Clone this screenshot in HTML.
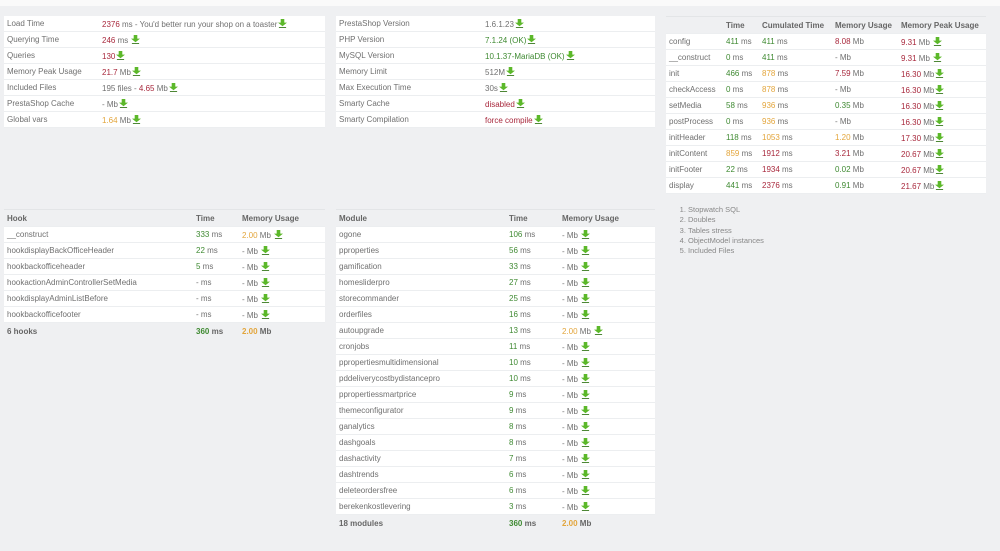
<!DOCTYPE html><html><head><meta charset="utf-8"><style>
body{margin:0;width:1000px;height:551px;background:#eff0f2;font-family:"Liberation Sans",sans-serif;font-size:8px;color:#707070;position:relative;overflow:hidden}
.top{position:absolute;left:0;top:0;width:1000px;height:6px;background:#fafafa}
.t{position:absolute;border-collapse:collapse;table-layout:fixed}
.t td,.t th{height:15px;padding:0 0 0 3px;border-bottom:1px solid #eceef0;white-space:nowrap;overflow:hidden;text-align:left;font-weight:normal}
.t tbody td{background:#fff}
.t th{background:#eff0f2;color:#666;font-weight:bold;border-top:1px solid #e3e5e7;height:16px}
.t tfoot td{background:#eff0f2;font-weight:bold;color:#666;border:none;height:16px}
.r{color:#a8283c}.g{color:#3f8a32}.o{color:#e3a53b}
.i{display:inline-block;width:9px;height:9px;vertical-align:-1px;margin-left:1px}
ol{position:absolute;left:668px;top:205px;margin:0;padding-left:20px;font-size:7.5px;line-height:10.3px;color:#888}
</style></head><body><div class="top"></div>
<svg width="0" height="0" style="position:absolute"><defs><symbol id="a" viewBox="0 0 10 10"><path d="M3 0h4v4h3L5 8 0 4h3z" fill="#5cb82a"/><rect x="1" y="9" width="8" height="1" fill="#3a7a20"/></symbol></defs></svg>

<table class="t" style="left:4px;top:16px;width:321px"><colgroup><col style="width:95px"><col></colgroup><tbody>
<tr><td>Load Time</td><td><span class="r">2376</span> ms - You'd better run your shop on a toaster<svg class="i"><use href="#a"/></svg></td></tr>
<tr><td>Querying Time</td><td><span class="r">246</span> ms <svg class="i"><use href="#a"/></svg></td></tr>
<tr><td>Queries</td><td><span class="r">130</span><svg class="i"><use href="#a"/></svg></td></tr>
<tr><td>Memory Peak Usage</td><td><span class="r">21.7</span> Mb<svg class="i"><use href="#a"/></svg></td></tr>
<tr><td>Included Files</td><td>195 files - <span class="r">4.65</span> Mb<svg class="i"><use href="#a"/></svg></td></tr>
<tr><td>PrestaShop Cache</td><td>- Mb<svg class="i"><use href="#a"/></svg></td></tr>
<tr><td>Global vars</td><td><span class="o">1.64</span> Mb<svg class="i"><use href="#a"/></svg></td></tr>
</tbody></table>

<table class="t" style="left:336px;top:16px;width:319px"><colgroup><col style="width:146px"><col></colgroup><tbody>
<tr><td>PrestaShop Version</td><td>1.6.1.23<svg class="i"><use href="#a"/></svg></td></tr>
<tr><td>PHP Version</td><td><span class="g">7.1.24 (OK)</span><svg class="i"><use href="#a"/></svg></td></tr>
<tr><td>MySQL Version</td><td><span class="g">10.1.37-MariaDB (OK)</span><svg class="i"><use href="#a"/></svg></td></tr>
<tr><td>Memory Limit</td><td>512M<svg class="i"><use href="#a"/></svg></td></tr>
<tr><td>Max Execution Time</td><td>30s<svg class="i"><use href="#a"/></svg></td></tr>
<tr><td>Smarty Cache</td><td><span class="r">disabled</span><svg class="i"><use href="#a"/></svg></td></tr>
<tr><td>Smarty Compilation</td><td><span class="r">force compile</span><svg class="i"><use href="#a"/></svg></td></tr>
</tbody></table>

<table class="t" style="left:666px;top:16px;width:320px"><colgroup><col style="width:57px"><col style="width:36px"><col style="width:73px"><col style="width:66px"><col></colgroup>
<thead><tr><th></th><th>Time</th><th>Cumulated Time</th><th>Memory Usage</th><th>Memory Peak Usage</th></tr></thead><tbody>
<tr><td>config</td><td><span class="g">411</span> ms</td><td><span class="g">411</span> ms</td><td><span class="r">8.08</span> Mb</td><td><span class="r">9.31</span> Mb <svg class="i"><use href="#a"/></svg></td></tr>
<tr><td>__construct</td><td><span class="g">0</span> ms</td><td><span class="g">411</span> ms</td><td>- Mb</td><td><span class="r">9.31</span> Mb <svg class="i"><use href="#a"/></svg></td></tr>
<tr><td>init</td><td><span class="g">466</span> ms</td><td><span class="o">878</span> ms</td><td><span class="r">7.59</span> Mb</td><td><span class="r">16.30</span> Mb<svg class="i"><use href="#a"/></svg></td></tr>
<tr><td>checkAccess</td><td><span class="g">0</span> ms</td><td><span class="o">878</span> ms</td><td>- Mb</td><td><span class="r">16.30</span> Mb<svg class="i"><use href="#a"/></svg></td></tr>
<tr><td>setMedia</td><td><span class="g">58</span> ms</td><td><span class="o">936</span> ms</td><td><span class="g">0.35</span> Mb</td><td><span class="r">16.30</span> Mb<svg class="i"><use href="#a"/></svg></td></tr>
<tr><td>postProcess</td><td><span class="g">0</span> ms</td><td><span class="o">936</span> ms</td><td>- Mb</td><td><span class="r">16.30</span> Mb<svg class="i"><use href="#a"/></svg></td></tr>
<tr><td>initHeader</td><td><span class="g">118</span> ms</td><td><span class="o">1053</span> ms</td><td><span class="o">1.20</span> Mb</td><td><span class="r">17.30</span> Mb<svg class="i"><use href="#a"/></svg></td></tr>
<tr><td>initContent</td><td><span class="o">859</span> ms</td><td><span class="r">1912</span> ms</td><td><span class="r">3.21</span> Mb</td><td><span class="r">20.67</span> Mb<svg class="i"><use href="#a"/></svg></td></tr>
<tr><td>initFooter</td><td><span class="g">22</span> ms</td><td><span class="r">1934</span> ms</td><td><span class="g">0.02</span> Mb</td><td><span class="r">20.67</span> Mb<svg class="i"><use href="#a"/></svg></td></tr>
<tr><td>display</td><td><span class="g">441</span> ms</td><td><span class="r">2376</span> ms</td><td><span class="g">0.91</span> Mb</td><td><span class="r">21.67</span> Mb<svg class="i"><use href="#a"/></svg></td></tr>
</tbody></table>

<ol><li>Stopwatch SQL</li><li>Doubles</li><li>Tables stress</li><li>ObjectModel instances</li><li>Included Files</li></ol>

<table class="t" style="left:4px;top:209px;width:321px"><colgroup><col style="width:189px"><col style="width:46px"><col></colgroup>
<thead><tr><th>Hook</th><th>Time</th><th>Memory Usage</th></tr></thead><tbody>
<tr><td>__construct</td><td><span class="g">333</span> ms</td><td><span class="o">2.00</span> Mb <svg class="i"><use href="#a"/></svg></td></tr>
<tr><td>hookdisplayBackOfficeHeader</td><td><span class="g">22</span> ms</td><td>- Mb <svg class="i"><use href="#a"/></svg></td></tr>
<tr><td>hookbackofficeheader</td><td><span class="g">5</span> ms</td><td>- Mb <svg class="i"><use href="#a"/></svg></td></tr>
<tr><td>hookactionAdminControllerSetMedia</td><td>- ms</td><td>- Mb <svg class="i"><use href="#a"/></svg></td></tr>
<tr><td>hookdisplayAdminListBefore</td><td>- ms</td><td>- Mb <svg class="i"><use href="#a"/></svg></td></tr>
<tr><td>hookbackofficefooter</td><td>- ms</td><td>- Mb <svg class="i"><use href="#a"/></svg></td></tr>
</tbody><tfoot><tr><td>6 hooks</td><td><span class="g">360</span> ms</td><td><span class="o">2.00</span> Mb</td></tr></tfoot></table>

<table class="t" style="left:336px;top:209px;width:319px"><colgroup><col style="width:170px"><col style="width:53px"><col></colgroup>
<thead><tr><th>Module</th><th>Time</th><th>Memory Usage</th></tr></thead><tbody>
<tr><td>ogone</td><td><span class="g">106</span> ms</td><td>- Mb <svg class="i"><use href="#a"/></svg></td></tr>
<tr><td>pproperties</td><td><span class="g">56</span> ms</td><td>- Mb <svg class="i"><use href="#a"/></svg></td></tr>
<tr><td>gamification</td><td><span class="g">33</span> ms</td><td>- Mb <svg class="i"><use href="#a"/></svg></td></tr>
<tr><td>homesliderpro</td><td><span class="g">27</span> ms</td><td>- Mb <svg class="i"><use href="#a"/></svg></td></tr>
<tr><td>storecommander</td><td><span class="g">25</span> ms</td><td>- Mb <svg class="i"><use href="#a"/></svg></td></tr>
<tr><td>orderfiles</td><td><span class="g">16</span> ms</td><td>- Mb <svg class="i"><use href="#a"/></svg></td></tr>
<tr><td>autoupgrade</td><td><span class="g">13</span> ms</td><td><span class="o">2.00</span> Mb <svg class="i"><use href="#a"/></svg></td></tr>
<tr><td>cronjobs</td><td><span class="g">11</span> ms</td><td>- Mb <svg class="i"><use href="#a"/></svg></td></tr>
<tr><td>ppropertiesmultidimensional</td><td><span class="g">10</span> ms</td><td>- Mb <svg class="i"><use href="#a"/></svg></td></tr>
<tr><td>pddeliverycostbydistancepro</td><td><span class="g">10</span> ms</td><td>- Mb <svg class="i"><use href="#a"/></svg></td></tr>
<tr><td>ppropertiessmartprice</td><td><span class="g">9</span> ms</td><td>- Mb <svg class="i"><use href="#a"/></svg></td></tr>
<tr><td>themeconfigurator</td><td><span class="g">9</span> ms</td><td>- Mb <svg class="i"><use href="#a"/></svg></td></tr>
<tr><td>ganalytics</td><td><span class="g">8</span> ms</td><td>- Mb <svg class="i"><use href="#a"/></svg></td></tr>
<tr><td>dashgoals</td><td><span class="g">8</span> ms</td><td>- Mb <svg class="i"><use href="#a"/></svg></td></tr>
<tr><td>dashactivity</td><td><span class="g">7</span> ms</td><td>- Mb <svg class="i"><use href="#a"/></svg></td></tr>
<tr><td>dashtrends</td><td><span class="g">6</span> ms</td><td>- Mb <svg class="i"><use href="#a"/></svg></td></tr>
<tr><td>deleteordersfree</td><td><span class="g">6</span> ms</td><td>- Mb <svg class="i"><use href="#a"/></svg></td></tr>
<tr><td>berekenkostlevering</td><td><span class="g">3</span> ms</td><td>- Mb <svg class="i"><use href="#a"/></svg></td></tr>
</tbody><tfoot><tr><td>18 modules</td><td><span class="g">360</span> ms</td><td><span class="o">2.00</span> Mb</td></tr></tfoot></table>
</body></html>
